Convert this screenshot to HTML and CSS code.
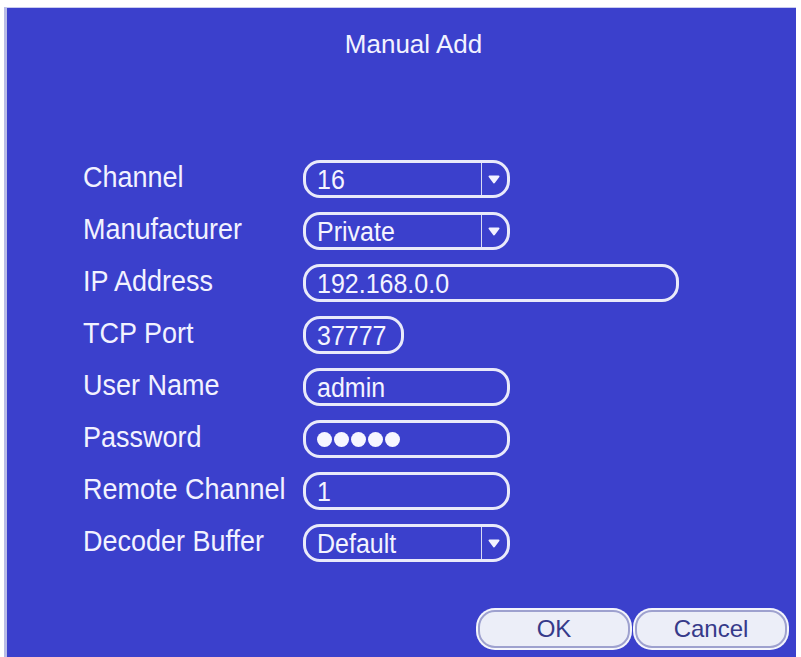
FILE: index.html
```html
<!DOCTYPE html>
<html>
<head>
<meta charset="utf-8">
<title>Manual Add</title>
<link rel="stylesheet" href="styles.css">
</head>
<body>
<div class="panel">
  <div class="title">Manual Add</div>
  <div class="form">
    <div class="row">
      <div class="label">Channel</div>
      <div class="field select"><span class="val">16</span><span class="arrow"><svg width="12" height="9" viewBox="0 0 12 9"><path d="M1.5 1.5 H10.5 L6 7.5 Z" fill="#f2f2ff" stroke="#f2f2ff" stroke-width="2" stroke-linejoin="round"/></svg></span></div>
    </div>
    <div class="row">
      <div class="label">Manufacturer</div>
      <div class="field select"><span class="val">Private</span><span class="arrow"><svg width="12" height="9" viewBox="0 0 12 9"><path d="M1.5 1.5 H10.5 L6 7.5 Z" fill="#f2f2ff" stroke="#f2f2ff" stroke-width="2" stroke-linejoin="round"/></svg></span></div>
    </div>
    <div class="row">
      <div class="label">IP Address</div>
      <div class="field wide"><span class="val">192.168.0.0</span></div>
    </div>
    <div class="row">
      <div class="label">TCP Port</div>
      <div class="field short"><span class="val">37777</span></div>
    </div>
    <div class="row">
      <div class="label">User Name</div>
      <div class="field"><span class="val">admin</span></div>
    </div>
    <div class="row">
      <div class="label">Password</div>
      <div class="field"><span class="dots"><i></i><i></i><i></i><i></i><i></i></span></div>
    </div>
    <div class="row">
      <div class="label">Remote Channel</div>
      <div class="field"><span class="val">1</span></div>
    </div>
    <div class="row">
      <div class="label">Decoder Buffer</div>
      <div class="field select"><span class="val">Default</span><span class="arrow"><svg width="12" height="9" viewBox="0 0 12 9"><path d="M1.5 1.5 H10.5 L6 7.5 Z" fill="#f2f2ff" stroke="#f2f2ff" stroke-width="2" stroke-linejoin="round"/></svg></span></div>
    </div>
  </div>
  <div class="buttons">
    <div class="btn">OK</div>
    <div class="btn">Cancel</div>
  </div>
</div>
</body>
</html>
```
FILE: styles.css
```css
html, body {
  margin: 0;
  padding: 0;
  background: #ffffff;
  overflow: hidden;
}
body {
  width: 801px;
  height: 657px;
  font-family: "Liberation Sans", Arial, sans-serif;
}
.panel {
  margin: 7px 0 0 4px;
  width: 792px;
  height: 660px;
  background: #3b40cc;
  border-left: 3px solid #b9bce6;
  border-top: 1px solid #c9cbef;
  padding-top: 21px;
  box-sizing: border-box;
  display: flex;
  flex-direction: column;
}
.title {
  color: #f2f2ff;
  font-size: 26px;
  line-height: 30px;
  text-align: center;
  padding-left: 24px;
}
.form {
  margin-top: 101px;
  padding-left: 76px;
  display: flex;
  flex-direction: column;
  gap: 14px;
}
.row {
  display: flex;
  align-items: center;
  height: 38px;
}
.label {
  width: 220px;
  color: #f2f2ff;
  font-size: 27px;
  line-height: 30px;
  margin-top: -4px;
  white-space: nowrap;
  transform: scaleY(1.1);
  transform-origin: left center;
}
.field {
  width: 207px;
  height: 38px;
  box-sizing: border-box;
  border: 3px solid #e9eafa;
  border-radius: 17px;
  display: flex;
  align-items: center;
  padding-left: 11px;
  color: #f4f4ff;
  font-size: 25px;
}
.field.wide { width: 376px; }
.field.short { width: 101px; }
.val {
  flex: 1;
  line-height: 30px;
  transform: scaleY(1.08);
  transform-origin: left center;
}
.select { padding-right: 0; }
.arrow {
  width: 25px;
  height: 100%;
  border-left: 1px solid #d8daf4;
  display: flex;
  align-items: center;
  justify-content: center;
}
.arrow svg { display: block; margin-left: -2px; }
.dots {
  display: flex;
  gap: 2px;
}
.dots i {
  width: 15px;
  height: 15px;
  border-radius: 50%;
  background: #f6f6ff;
}
.buttons {
  margin-top: 48px;
  display: flex;
  justify-content: flex-end;
  gap: 5px;
  padding-right: 9px;
}
.btn {
  width: 152px;
  height: 38px;
  box-sizing: border-box;
  background: #eceef8;
  border: 2px solid #9ea1cf;
  box-shadow: 0 0 0 2px #f4f5fc;
  border-radius: 17px;
  color: #363a8a;
  font-size: 24px;
  line-height: 34px;
  text-align: center;
}
```
